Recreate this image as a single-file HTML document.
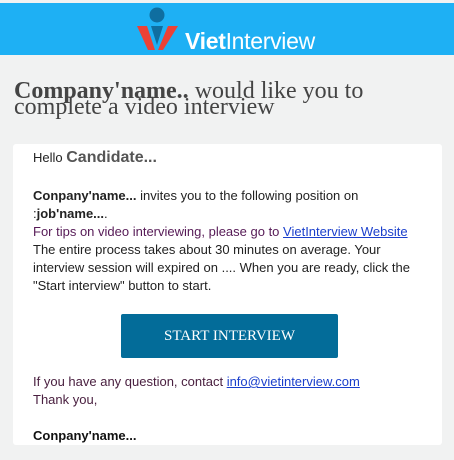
<!DOCTYPE html>
<html><head><meta charset="utf-8"><style>
body{margin:0;width:454px;height:460px;background:#f1f2f2;overflow:hidden;font-family:"Liberation Sans",Arial,sans-serif;}
.hdr{position:absolute;left:0;top:3px;width:454px;height:52px;background:#1eb0f4;}
.brand{position:absolute;left:185px;top:25px;font-size:23px;color:#fff;letter-spacing:-0.3px}
.brand b{font-weight:bold}
h1{position:absolute;left:14px;top:83px;margin:0;font-family:"Liberation Serif",serif;font-weight:normal;font-size:24px;line-height:16px;color:#444;width:430px}
.card{position:absolute;left:13px;top:144px;width:429px;height:301px;background:#fff;border-radius:3px}
.t{position:absolute;left:20px;font-size:13px;line-height:18px;color:#222;width:400px}
.btn{position:absolute;left:108px;top:170px;width:217px;height:44px;background:#036c99;border-radius:2px;color:#fff;font-family:"Liberation Serif",serif;font-size:15px;text-align:center;line-height:44px}
a{color:#1a3fcc;text-decoration:underline}
</style></head><body>
<div class="hdr">
<svg style="position:absolute;left:130px;top:0" width="56" height="52" viewBox="130 3 56 52">
<circle cx="157" cy="15" r="7.5" fill="#0f6ea0"/>
<polygon points="137,26 147,26 155,50 148,50" fill="#ec4136"/>
<polygon points="168,26 178,26 163,50 158,50" fill="#ec4136"/>
<polygon points="151,26 163,26 157,45" fill="#0f6ea0"/>
</svg>
<div class="brand"><b>Viet</b>Interview</div>
</div>
<h1><b>Company'name..</b> would like you to complete a video interview</h1>
<div class="card">
<div class="t" style="top:5px">Hello <b style="font-size:16px;color:#555">Candidate...</b></div>
<div class="t" style="top:43px;width:390px"><b>Conpany'name...</b> invites you to the following position on :<b>job'name...</b>.<br><span style="color:#561a56">For tips on video interviewing, please go to </span><a>VietInterview Website</a><br>The entire process takes about 30 minutes on average. Your interview session will expired on .... When you are ready, click the "Start interview" button to start.</div>
<div class="btn">START INTERVIEW</div>
<div class="t" style="top:229px;color:#4a2040">If you have any question, contact <a>info@vietinterview.com</a><br>Thank you,<br><br><b style="color:#111">Conpany'name...</b></div>
</div>
</body></html>
